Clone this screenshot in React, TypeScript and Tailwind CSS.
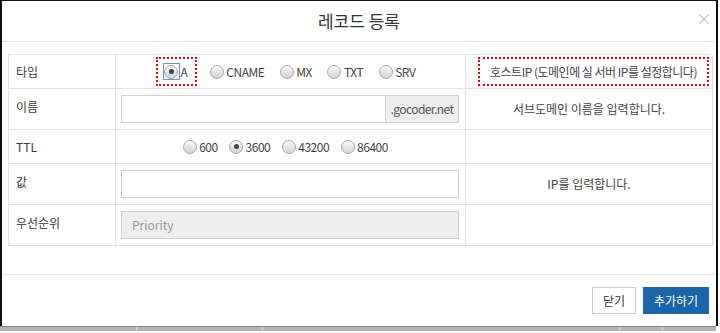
const font = { fontFamily: '"Noto Sans CJK KR", "Noto Sans", sans-serif' };

const Radio = ({ checked = false, focus = false }: { checked?: boolean; focus?: boolean }) => (
  <span
    className={`inline-flex items-center justify-center w-[17px] h-[17px] ${
      focus ? 'border border-[#5b9bd5]' : 'border border-transparent'
    }`}
  >
    <span className="flex items-center justify-center w-[14px] h-[14px] rounded-full border border-[#a8a8a8] bg-gradient-to-b from-[#fbfbfb] to-[#d2d2d2]">
      {checked && <span className="w-[5px] h-[5px] rounded-full bg-[#444]" />}
    </span>
  </span>
)

const RadioItem = ({ label, checked, focus }: { label: string; checked?: boolean; focus?: boolean }) => (
  <span className="inline-flex items-center gap-[1px] text-[12px] text-[#444] tracking-[-0.5px]">
    <Radio checked={checked} focus={focus} />
    <span>{label}</span>
  </span>
)

const Cell = ({ children, className = '' }: { children?: React.ReactNode; className?: string }) => (
  <div className={`border-r border-b border-[#e2e2e2] ${className}`}>{children}</div>
)

export default function App() {
  return (
    <div className="w-[720px] h-[333px] bg-white overflow-hidden text-[#3a3a3a]" style={font}>
      <div className="w-[718px] h-[326px] border-l-2 border-r-2 border-t border-[#111] bg-white flex flex-col">
        {/* header */}
        <div className="h-[41px] border-b border-[#e5e5e5] flex items-center justify-center relative shrink-0">
          <h2 className="text-[17px] text-[#333] mt-[-1px]">레코드 등록</h2>
          <span className="absolute right-[4px] top-[9px] text-[16px] text-[#c4c4c4] leading-none">×</span>
        </div>

        {/* body */}
        <div className="px-[6px] pt-[12px] h-[232px] shrink-0">
          <div className="grid grid-cols-[107px_350px_247px] grid-rows-[34px_41px_34px_41px_41px] border-l border-t border-[#e2e2e2] text-[12px]">
            {/* 타입 */}
            <Cell className="flex items-center pl-[7px]">타입</Cell>
            <Cell className="flex items-center justify-center gap-[14px] pl-[8px]">
              <span className="inline-flex items-center border-[2.5px] border-dotted border-[#f00000] pl-[5px] pr-[8px] h-[29px] ml-[-18px] mr-[-3px]">
                <RadioItem label="A" checked focus />
              </span>
              <RadioItem label="CNAME" />
              <RadioItem label="MX" />
              <RadioItem label="TXT" />
              <RadioItem label="SRV" />
            </Cell>
            <Cell className="flex items-center justify-end pr-[3px]">
              <span className="border-[2.5px] border-dotted border-[#f00000] h-[29px] w-[231px] flex items-center justify-center text-[#444] tracking-[-0.5px]">
                호스트IP (도메인에 실 서버 IP를 설정합니다)
              </span>
            </Cell>

            {/* 이름 */}
            <Cell className="pl-[7px] pt-[9px]">이름</Cell>
            <Cell className="flex items-center px-[5px]">
              <div className="flex w-[338px] h-[28px]">
                <div className="flex-1 border border-[#d0d0d0] bg-white" />
                <div className="w-[73px] border border-l-0 border-[#d0d0d0] bg-[#eeeeee] flex items-center justify-center text-[#555] tracking-[-0.6px]">
                  .gocoder.net
                </div>
              </div>
            </Cell>
            <Cell className="flex items-center justify-center text-[#444]">서브도메인 이름을 입력합니다.</Cell>

            {/* TTL */}
            <Cell className="flex items-center pl-[7px]">TTL</Cell>
            <Cell className="flex items-center justify-center gap-[10px] pr-[12px]">
              <RadioItem label="600" />
              <RadioItem label="3600" checked />
              <RadioItem label="43200" />
              <RadioItem label="86400" />
            </Cell>
            <Cell />

            {/* 값 */}
            <Cell className="pl-[7px] pt-[9px]">값</Cell>
            <Cell className="flex items-center px-[5px]">
              <div className="w-[338px] h-[28px] border border-[#d0d0d0] bg-white" />
            </Cell>
            <Cell className="flex items-center justify-center text-[#444]">IP를 입력합니다.</Cell>

            {/* 우선순위 */}
            <Cell className="pl-[7px] pt-[9px]">우선순위</Cell>
            <Cell className="flex items-center px-[5px]">
              <div className="w-[338px] h-[28px] border border-[#d0d0d0] bg-[#eeeeee] flex items-center pl-[10px] text-[#999]">
                Priority
              </div>
            </Cell>
            <Cell />
          </div>
        </div>

        {/* footer */}
        <div className="border-t border-[#e5e5e5] flex justify-end items-start gap-[7px] pt-[12px] pr-[7px] flex-1">
          <button className="h-[27px] w-[44px] border border-[#ccc] bg-white text-[12px] text-[#333]">닫기</button>
          <button className="h-[27px] w-[66px] bg-[#1b66ab] text-[12px] text-white">추가하기</button>
        </div>
      </div>

      {/* page behind the modal */}
      <div className="w-[716px] h-[5px] flex border-t border-[#8a8a8a] bg-[#b4b4b4]">
        <div className="w-[137px] border-r border-[#d8d8d8]" />
        <div className="w-[126px] border-r border-[#d8d8d8]" />
        <div className="w-[357px] border-r border-[#d8d8d8]" />
        <div className="w-[43px] border-r border-[#d8d8d8]" />
        <div className="flex-1" />
      </div>
    </div>
  )
}
